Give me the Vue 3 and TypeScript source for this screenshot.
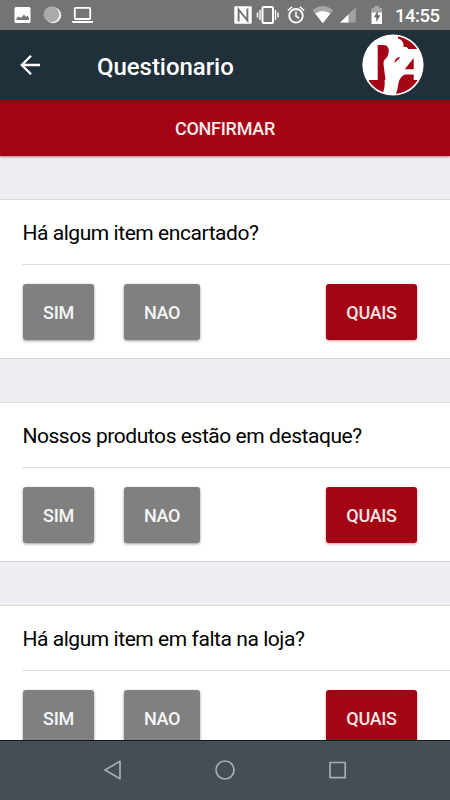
<script setup lang="ts">
import { ref } from 'vue'

interface Question {
  id: number
  text: string
}

const questions = ref<Question[]>([
  { id: 1, text: 'Há algum item encartado?' },
  { id: 2, text: 'Nossos produtos estão em destaque?' },
  { id: 3, text: 'Há algum item em falta na loja?' },
])
</script>

<template>
  <div class="screen">
    <div class="status">
      <svg class="status-left" width="110" height="30" viewBox="0 0 110 30">
        <rect x="14.5" y="7" width="16" height="16" rx="1.5" fill="#fff" />
        <path d="M16.5 20v-2l2.5-1.500 2 1.500 3-3.500 2 2.500 1.500-1.500 1.500 2.500v2z" fill="#747474" />
        <circle cx="53.2" cy="15.2" r="8" fill="#f3f3f3" />
        <circle cx="51.6" cy="14.4" r="7.6" fill="#aaa" stroke="#c5c5c5" stroke-width=".9" stroke-dasharray="1 1" />
        <rect x="74.8" y="7.8" width="15.4" height="11.2" rx="1" fill="none" stroke="#fff" stroke-width="1.8" />
        <path d="M72 21h21v1.200l-1 .8H73l-1-.8z" fill="#fff" />
      </svg>
      <svg class="status-right" width="160" height="30" viewBox="230 0 160 30">
        <rect x="234.3" y="6.3" width="17.4" height="17.4" rx="1" fill="#fff" />
        <path d="M238.600 21.500V9.500l8.800 11V8.500" fill="none" stroke="#747474" stroke-width="2" />
        <rect x="262.5" y="7" width="10.5" height="16" rx="1" fill="none" stroke="#fff" stroke-width="2" />
        <path d="M260 10v10M257.500 12.500v5M275.500 10v10M278 12.500v5" stroke="#fff" stroke-width="1.4" />
        <circle cx="296" cy="15.8" r="6.8" fill="none" stroke="#fff" stroke-width="1.8" />
        <path d="M296 11.500v4.700l3.200 2M287.800 10.500l4.300-3.600M304.200 10.500l-4.300-3.600" fill="none" stroke="#fff" stroke-width="1.6" />
        <path d="M312.500 10.300Q322.800 1.700 333.200 10.300L322.800 23.200z" fill="#a5a5a5" />
        <path d="M315.200 13.600Q322.800 8.200 330.400 13.600L322.800 23.200z" fill="#fff" />
        <path d="M340 22.600L355.800 7.300v15.300z" fill="#a0a0a0" />
        <path d="M340 22.600l8.500-8.200v8.200z" fill="#fff" />
        <path d="M371.500 8h2.800V6h5v2h2.700v5h-10.500z" fill="#a5a5a5" />
        <path d="M371.500 12.500H382V24h-10.500z" fill="#fff" />
        <path d="M377.800 10.800l-4 6.500h2.500v4.800l4-6.800h-2.500z" fill="#656565" />
      </svg>
      <span class="clock">14:55</span>
    </div>

    <header class="toolbar">
      <button class="back" type="button" aria-label="Voltar">
        <svg width="22" height="22" viewBox="0 0 22 22">
          <path d="M20 11H2.300M11 1.800L1.800 11l9.200 9.200" fill="none" stroke="#fff" stroke-width="2.3" />
        </svg>
      </button>
      <h1 class="title">Questionario</h1>
      <svg class="logo" width="62" height="62" viewBox="0 0 62 62">
        <defs>
          <clipPath id="logo-disc"><circle cx="31" cy="31" r="29" /></clipPath>
        </defs>
        <circle cx="31" cy="31" r="30.6" fill="#fff" />
        <g clip-path="url(#logo-disc)" fill="#a40414">
          <path d="M15.700 11h6q5.300 0 5 6.500-.4 5.500-3.700 7.800-2 1.700-1.500 4.700L23.500 46h-7.800z" />
          <path d="M7 46h15.500q1 6-2 14H7z" />
          <path d="M36 2Q48 3 57 15H46.500Q44.500 12 41.500 13 42.500 6.500 36 4.500z" />
          <path d="M38.500 23.300q-5.500-.5-6 5.700z" />
          <path d="M51.700 24v11.300h-9z" />
          <path d="M43 40.600h8.700V46H57q-9 14-23.500 15 2-4.500 2.700-10.500 1-7.500 6.800-9.900z" />
        </g>
      </svg>
    </header>

    <main class="content">
      <button class="confirm" type="button">CONFIRMAR</button>
      <section v-for="q in questions" :key="q.id" class="card">
        <h2 class="question">{{ q.text }}</h2>
        <div class="answers">
          <button class="btn sim" type="button">SIM</button>
          <button class="btn nao" type="button">NAO</button>
          <button class="btn quais" type="button">QUAIS</button>
        </div>
      </section>
    </main>

    <nav class="navbar">
      <svg width="450" height="59" viewBox="0 741 450 59" fill="none" stroke="#a7adb2" stroke-width="1.7" stroke-linejoin="round">
        <path d="M120 761.300v17.400L105 770z" />
        <circle cx="225" cy="770" r="9" />
        <rect x="330" y="762.5" width="15.2" height="15.2" />
      </svg>
    </nav>
  </div>
</template>

<style>
body {
  margin: 0;
  overflow: hidden;
}
</style>

<style scoped>
.screen {
  display: flex;
  flex-direction: column;
  width: 450px;
  height: 800px;
  overflow: hidden;
  background: #efeef4;
  font-family: Roboto, sans-serif;
}
button {
  padding: 0;
  border: 0;
  font-family: inherit;
}
.status {
  display: flex;
  flex: none;
  align-items: center;
  height: 30px;
  background: #747474;
}
.status-right {
  margin-left: 120px;
}
.clock {
  margin-left: 5px;
  padding-top: 2px;
  color: #fff;
  font-size: 18.5px;
  line-height: 28px;
  font-weight: 500;
  letter-spacing: -0.5px;
  white-space: nowrap;
}
.toolbar {
  display: flex;
  flex: none;
  align-items: center;
  height: 70px;
  background: #1f303a;
}
.back {
  display: flex;
  margin: 0 0 0 20px;
  background: none;
}
.title {
  flex: 1;
  margin: 3px 0 0 55px;
  color: #fff;
  font-size: 24px;
  line-height: 30px;
  font-weight: 500;
  letter-spacing: -0.05px;
}
.logo {
  margin-right: 26px;
}
.content {
  flex: 1;
  min-height: 0;
  overflow: hidden;
}
.confirm {
  display: block;
  width: 100%;
  height: 56px;
  margin-bottom: 43px;
  background: linear-gradient(#850713, #a30313 4px);
  box-shadow: 0 1px 2px rgba(120, 0, 10, 0.5);
  color: #fbe9eb;
  font-size: 18px;
  font-weight: 500;
  letter-spacing: -0.25px;
}
.card {
  box-sizing: border-box;
  height: 160px;
  margin-bottom: 43px;
  border-top: 1px solid #dcdbe0;
  border-bottom: 1px solid #d5d4d9;
  background: #fff;
}
.question {
  height: 64px;
  margin: 0 0 0 22px;
  padding-left: 0.4px;
  border-bottom: 1px solid #dedede;
  color: #000;
  font-size: 21px;
  line-height: 66px;
  font-weight: 400;
  letter-spacing: -0.44px;
  white-space: nowrap;
}
.answers {
  display: flex;
  padding: 19px 33px 0 23px;
}
.btn {
  height: 56px;
  border-radius: 3px;
  background: #808080;
  box-shadow: 0 1px 3px rgba(0, 0, 0, 0.4);
  color: #f6f6f6;
  font-size: 18px;
  font-weight: 500;
  letter-spacing: -0.3px;
}
.sim {
  width: 71px;
}
.nao {
  width: 76px;
  margin-left: 30px;
}
.quais {
  width: 91px;
  margin-left: auto;
  background: #a30313;
  box-shadow: 0 1px 3px rgba(150, 0, 15, 0.4);
  color: #fbe3e6;
}
.navbar {
  flex: none;
  height: 59px;
  border-top: 1px solid #15191c;
  background: #464d54;
}
.navbar svg {
  display: block;
}
</style>
